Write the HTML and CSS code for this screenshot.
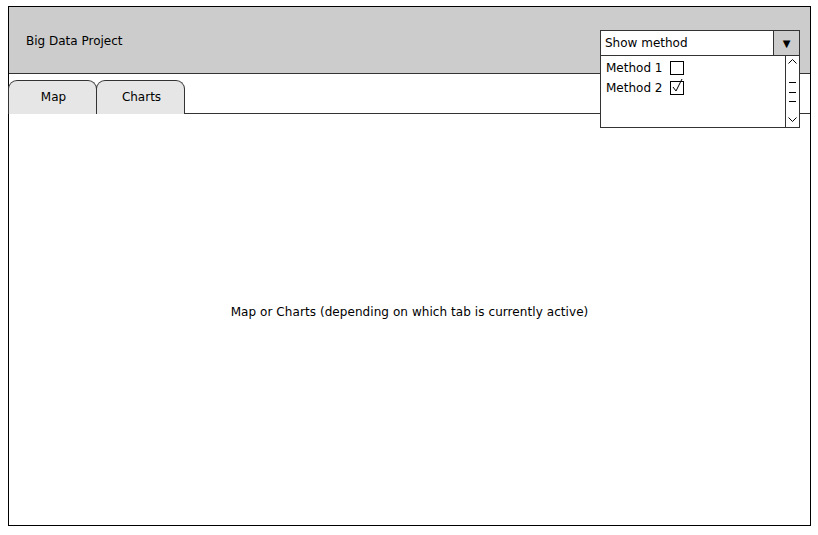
FILE: index.html
```html
<!DOCTYPE html>
<html>
<head>
    <title>Big Data Project</title>
    <link rel="stylesheet" href="styles.css">
</head>
<body>
    <div class="frame">
        <div class="header">Big Data Project</div>

        <div class="tabs">
            <div class="tab">Map</div>
            <div class="tab">Charts</div>
        </div>

        <div class="content">Map or Charts (depending on which tab is currently active)</div>

        <!-- method picker, opened over the header -->
        <div class="picker">
            <div class="picker-box">
                <span class="picker-label">Show method</span>
                <span class="picker-arrow">&#9660;</span>
            </div>
            <div class="picker-list">
                <div class="picker-items">
                    <div class="item">Method 1 <span class="check"></span></div>
                    <div class="item">Method 2 <span class="check">
                        <svg width="16" height="16" viewBox="0 0 16 16"><path d="M3 9 L6 13 L12 1" fill="none" stroke="#000" stroke-width="1"/></svg>
                    </span></div>
                </div>
                <div class="scroll">
                    <svg width="13" height="70" viewBox="0 0 13 70">
                        <path d="M2.5 7.5 L6.5 3.5 L10.5 7.5" fill="none" stroke="#000"/>
                        <path d="M3 26.5 H10 M3 36.5 H10 M3 45.5 H10" stroke="#000"/>
                        <path d="M2.5 61.5 L6.5 65.5 L10.5 61.5" fill="none" stroke="#000"/>
                    </svg>
                </div>
            </div>
        </div>
    </div>
</body>
</html>
```

FILE: styles.css
```css
body {
    margin: 0;
    font-family: "DejaVu Sans", sans-serif;
    font-size: 12px;
    color: #000;
    background: #fff;
}

.frame {
    position: relative;
    margin: 6px 0 0 8px;
    width: 803px;
    height: 520px;
    border: 1px solid #000;
    box-sizing: border-box;
    display: flex;
    flex-direction: column;
}

.header {
    height: 67px;
    background: #cccccc;
    border-bottom: 1px solid #333;
    display: flex;
    align-items: center;
    padding-left: 17px;
    padding-top: 1px;
    box-sizing: border-box;
}

.tabs {
    display: flex;
    margin-top: 6px;
    margin-left: -1px;
    height: 34px;
    border-bottom: 1px solid #333;
    box-sizing: border-box;
}

.tab {
    width: 89px;
    height: 34px;
    box-sizing: border-box;
    background: #e6e6e6;
    border: 1px solid #333;
    border-bottom: none;
    border-radius: 9px 9px 0 0;
    display: flex;
    align-items: center;
    justify-content: center;
    padding: 0 0 1px 2px;
}

.tab + .tab {
    margin-left: -1px;
}

.content {
    flex: 1;
    display: flex;
    align-items: center;
    justify-content: center;
    padding-bottom: 16px;
    letter-spacing: 0.07px;
}

.picker {
    position: absolute;
    left: 591px;
    top: 23px;
    width: 200px;
}

.picker-box {
    height: 26px;
    border: 1px solid #333;
    box-sizing: border-box;
    background: #fff;
    display: flex;
    align-items: center;
}

.picker-label {
    flex: 1;
    padding-left: 4px;
}

.picker-arrow {
    width: 25px;
    height: 24px;
    background: #cccccc;
    border-left: 1px solid #333;
    display: flex;
    align-items: center;
    justify-content: center;
    font-size: 10px;
}

.picker-list {
    height: 73px;
    margin-top: -1px;
    border: 1px solid #333;
    box-sizing: border-box;
    background: #fff;
    display: flex;
}

.picker-items {
    flex: 1;
    padding: 2px 0 0 5px;
}

.item {
    height: 20px;
    display: flex;
    align-items: center;
}

.check {
    display: inline-block;
    position: relative;
    width: 14px;
    height: 14px;
    border: 1px solid #000;
    box-sizing: border-box;
    margin-left: 8px;
}

.check svg {
    position: absolute;
    left: -1px;
    top: -4px;
}

.scroll {
    width: 13px;
    border-left: 1px solid #333;
}

.scroll svg {
    display: block;
}
```
